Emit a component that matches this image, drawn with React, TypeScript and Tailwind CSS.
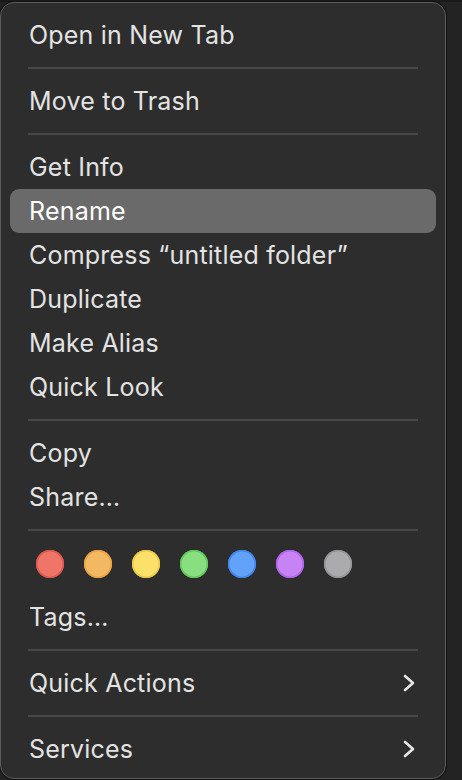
import React from "react";

type Item = { label: string; highlight?: boolean; submenu?: boolean };

const Chevron = () => (
  <svg width="14" height="20" viewBox="0 0 14 20" fill="none">
    <polyline points="3,3 11,10 3,17" stroke="#e6e6e6" strokeWidth="2.6" strokeLinecap="round" strokeLinejoin="round" />
  </svg>
);

const Row = ({ item }: { item: Item }) => (
  <div
    className={`mx-[9px] h-[44px] flex items-center justify-between pl-[19px] pr-[20px] rounded-[9px] ${
      item.highlight ? "bg-[#6a6a6a] text-white" : "text-[#e3e3e3]"
    }`}
  >
    <span className="text-[25px] leading-none tracking-[0.2px]">{item.label}</span>
    {item.submenu && <Chevron />}
  </div>
);

const Sep = () => <div className="mx-[27px] my-[10px] h-[2px] bg-[#474747]" />;

const dots = [
  { fill: "#ef7569", ring: "#e0564b" },
  { fill: "#f3b862", ring: "#e9a341" },
  { fill: "#fbe06a", ring: "#ecc844" },
  { fill: "#88df7f", ring: "#5fc957" },
  { fill: "#63a2fa", ring: "#3d86f2" },
  { fill: "#c783f6", ring: "#b262ee" },
  { fill: "#ababae", ring: "#949497" },
];

export default function App() {
  return (
    <div
      className="w-[462px] h-[780px] bg-[#232323] overflow-hidden"
      style={{ fontFamily: "Inter, 'Noto Sans', sans-serif" }}
    >
      <div className="h-[2px] bg-[#1a1a1a]" />
      <div className="w-[446px] h-[777px] rounded-[14px] border border-[#5c5c5c] bg-[#2d2d2d] shadow-[0_0_0_1px_#111] pt-[10px] flex flex-col">
        <Row item={{ label: "Open in New Tab" }} />
        <Sep />
        <Row item={{ label: "Move to Trash" }} />
        <Sep />
        <Row item={{ label: "Get Info" }} />
        <Row item={{ label: "Rename", highlight: true }} />
        <Row item={{ label: "Compress \u201Cuntitled folder\u201D" }} />
        <Row item={{ label: "Duplicate" }} />
        <Row item={{ label: "Make Alias" }} />
        <Row item={{ label: "Quick Look" }} />
        <Sep />
        <Row item={{ label: "Copy" }} />
        <Row item={{ label: "Share\u2026" }} />
        <Sep />
        <div className="h-[54px] pt-[9px] pl-[35px] flex items-start gap-[20px]">
          {dots.map((d, i) => (
            <div
              key={i}
              className="w-[28px] h-[28px] rounded-full"
              style={{ backgroundColor: d.fill, boxShadow: `inset 0 0 0 1.5px ${d.ring}` }}
            />
          ))}
        </div>
        <Row item={{ label: "Tags\u2026" }} />
        <Sep />
        <Row item={{ label: "Quick Actions", submenu: true }} />
        <Sep />
        <Row item={{ label: "Services", submenu: true }} />
      </div>
    </div>
  );
}
